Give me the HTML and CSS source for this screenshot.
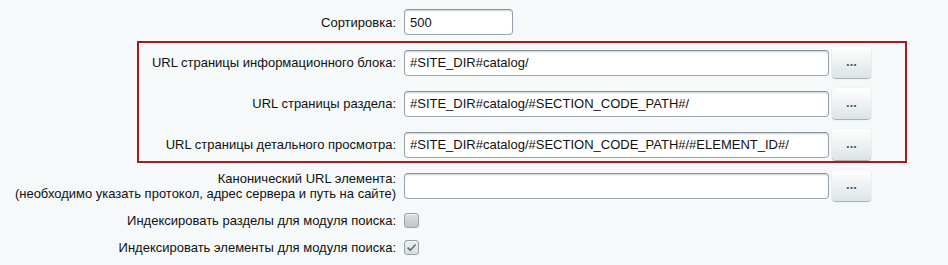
FILE: index.html
```html
<!DOCTYPE html>
<html lang="ru">
<head>
<meta charset="utf-8">
<title>Настройки</title>
<link rel="stylesheet" href="styles.css">
</head>
<body>
<div class="form">
  <div class="row row-sort">
    <label class="lbl">Сортировка:</label>
    <div class="val"><input class="inp inp-short" type="text" value="500"></div>
  </div>

  <div class="box">
    <div class="row row-url">
      <label class="lbl">URL страницы информационного блока:</label>
      <div class="val"><input class="inp inp-long" type="text" value="#SITE_DIR#catalog/"><button class="btn">...</button></div>
    </div>
    <div class="row row-url">
      <label class="lbl">URL страницы раздела:</label>
      <div class="val"><input class="inp inp-long" type="text" value="#SITE_DIR#catalog/#SECTION_CODE_PATH#/"><button class="btn">...</button></div>
    </div>
    <div class="row row-url">
      <label class="lbl">URL страницы детального просмотра:</label>
      <div class="val"><input class="inp inp-long" type="text" value="#SITE_DIR#catalog/#SECTION_CODE_PATH#/#ELEMENT_ID#/"><button class="btn">...</button></div>
    </div>
  </div>

  <div class="row row-canon">
    <label class="lbl lbl-two">Канонический URL элемента:<br>(необходимо указать протокол, адрес сервера и путь на сайте)</label>
    <div class="val"><input class="inp inp-long" type="text" value=""><button class="btn">...</button></div>
  </div>

  <div class="row row-check row-check1">
    <label class="lbl">Индексировать разделы для модуля поиска:</label>
    <div class="val"><span class="chk"></span></div>
  </div>
  <div class="row row-check">
    <label class="lbl">Индексировать элементы для модуля поиска:</label>
    <div class="val"><span class="chk chk-on"><svg viewBox="0 0 15 15" width="15" height="15"><path d="M3.6 7.6 L6.3 10.2 L11.6 4.6" fill="none" stroke="#5b6469" stroke-width="1.5"/></svg></span></div>
  </div>
</div>
</body>
</html>
```

FILE: styles.css
```css
* { box-sizing: border-box; }
html, body { margin: 0; padding: 0; }
body {
  background: #f5f9f9;
  font-family: "Liberation Sans", Arial, sans-serif;
  font-size: 13px;
  color: #000;
  width: 948px;
  height: 265px;
  overflow: hidden;
}
.row {
  display: grid;
  grid-template-columns: 396px 1fr;
  column-gap: 8px;
  align-items: center;
}
.lbl {
  text-align: right;
  white-space: nowrap;
  color: #111;
}
.val { display: flex; align-items: center; }
.row-sort { margin-top: 9px; height: 26px; margin-bottom: 6px; }
.inp {
  height: 26px;
  border: 1px solid;
  border-color: #87919c #959ea9 #9ea7b1 #959ea9;
  border-radius: 4px;
  background: #fff;
  box-shadow: 0 1px 0 0 rgba(255,255,255,.3), inset 0 2px 2px -1px rgba(180,188,191,.7);
  padding: 0 5px;
  font-family: "Liberation Sans", Arial, sans-serif;
  font-size: 13px;
  color: #111;
  outline: none;
}
.inp-short { width: 109px; }
.inp-long { width: 425px; }
.btn {
  margin-left: 3px;
  width: 39px;
  height: 31px;
  border: none;
  border-radius: 4px;
  background: linear-gradient(to bottom, #ffffff, #dce4e7);
  box-shadow: 0 0 1px rgba(0,0,0,.2), 0 1px 1px rgba(0,0,0,.3), inset 0 1px #fff;
  color: #4a545c;
  font-family: "Liberation Sans", Arial, sans-serif;
  font-size: 13px;
  font-weight: bold;
  padding: 0 0 3px 0;
  text-shadow: 0 1px rgba(255,255,255,.7);
}
.box {
  margin-left: 137px;
  width: 770px;
  border: 2px solid #a31c20;
  padding: 4px 0 1px 0;
}
.box .row { grid-template-columns: 257px 1fr; }
.row-url { height: 31px; }
.row-url + .row-url { margin-top: 10px; }
.row-canon { margin-top: 7px; height: 31px; }
.lbl-two { line-height: 15px; }
.row-check { height: 27px; }
.row-check1 { margin-top: 6px; }
.chk {
  display: block;
  width: 15px;
  height: 15px;
  border: 1px solid #98a1a6;
  border-radius: 3px;
  background: linear-gradient(to bottom, #dce0e2, #bfc5c8);
  box-shadow: inset 0 1px 0 rgba(255,255,255,.5);
  position: relative;
}
.chk-on {
  background: linear-gradient(to bottom, #eef1f2, #d8dddf);
}
.chk svg { position: absolute; left: -1px; top: -1px; }
```
